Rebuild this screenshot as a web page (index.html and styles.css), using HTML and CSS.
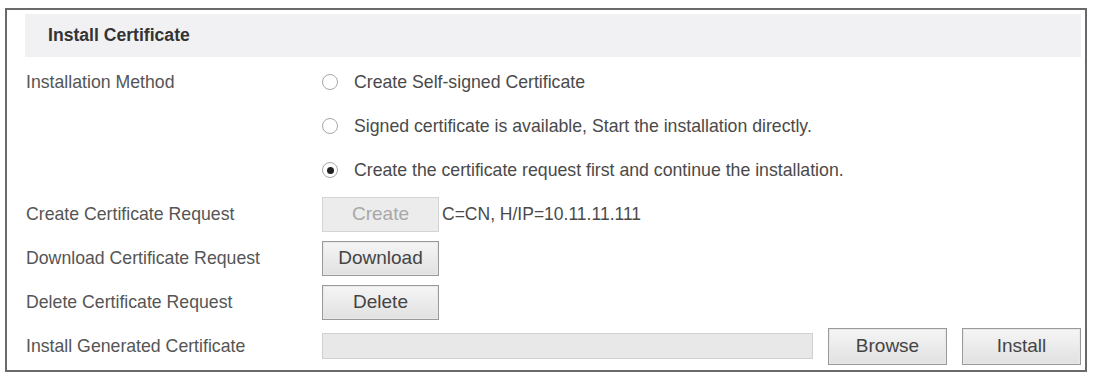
FILE: index.html
```html
<!DOCTYPE html>
<html lang="en">
<head>
    <meta charset="UTF-8">
    <title>Install Certificate</title>
    <link rel="stylesheet" href="styles.css">
</head>
<body>
    <div class="panel">
        <div class="panel-title">Install Certificate</div>

        <div class="row tall">
            <div class="label">Installation Method</div>
            <div class="radios">
                <label class="radio"><span class="dot"></span>Create Self-signed Certificate</label>
                <label class="radio"><span class="dot"></span>Signed certificate is available, Start the installation directly.</label>
                <label class="radio"><span class="dot checked"></span>Create the certificate request first and continue the installation.</label>
            </div>
        </div>

        <div class="row">
            <div class="label">Create Certificate Request</div>
            <div class="control">
                <button class="btn" disabled>Create</button>
                <span class="info">C=CN, H/IP=10.11.11.111</span>
            </div>
        </div>

        <div class="row">
            <div class="label">Download Certificate Request</div>
            <div class="control"><button class="btn">Download</button></div>
        </div>

        <div class="row">
            <div class="label">Delete Certificate Request</div>
            <div class="control"><button class="btn">Delete</button></div>
        </div>

        <div class="row">
            <div class="label">Install Generated Certificate</div>
            <div class="control">
                <input class="file-path" type="text" disabled>
                <button class="btn wide">Browse</button>
                <button class="btn wide">Install</button>
            </div>
        </div>
    </div>
</body>
</html>
```

FILE: styles.css
```css
body { margin: 0; background: #fff; font-family: "Liberation Sans", Arial, sans-serif; color: #4a4a4a; }
.panel { box-sizing: border-box; width: 1082px; margin: 8px 0 0 5px; padding: 4px 4px 2px 18px; border: 2px solid #6a6a6a; }
.panel-title { height: 43px; line-height: 43px; padding-left: 23px; background: #f1f0f2; font-weight: bold; font-size: 17.6px; color: #333; margin-bottom: 3px; }
.row { display: grid; grid-template-columns: 297px 1fr; align-items: center; height: 44px; }
.row.tall { height: auto; align-items: start; }
.label { padding-left: 1px; font-size: 17.7px; line-height: 44px; color: #555; }
.radios { display: flex; flex-direction: column; }
.radio { display: flex; align-items: center; height: 44px; font-size: 17.7px; color: #4a4a4a; }
.dot { box-sizing: border-box; width: 16px; height: 16px; margin-right: 16px; border: 1px solid #a8a8a8; border-radius: 50%; background: #fff; display: flex; align-items: center; justify-content: center; }
.dot.checked::after { content: ""; width: 7px; height: 7px; border-radius: 50%; background: #222; }
.control { display: flex; align-items: center; }
.btn { box-sizing: border-box; width: 117px; height: 35px; padding: 0; border: 1px solid #999; box-shadow: inset 0 0 0 1px #e8e8e8; background: linear-gradient(#f5f5f5, #e1e1e1); font-family: "Liberation Sans", Arial, sans-serif; font-size: 19px; color: #444; }
.btn:disabled { border-color: #d4d4d4; box-shadow: none; background: #ececec; color: #a8a8a8; }
.btn.wide { width: 119px; height: 37px; margin-left: 15px; }
.info { margin-left: 3px; font-size: 17.5px; color: #4a4a4a; }
.file-path { box-sizing: border-box; width: 491px; height: 26px; border: 1px solid #d0d0d0; background: #e8e8e8; }
```
